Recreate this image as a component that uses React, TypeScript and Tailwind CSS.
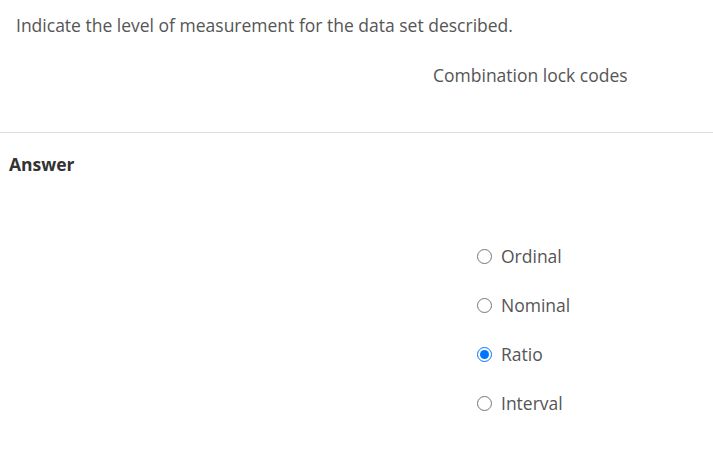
import { useState } from "react";

const opts = ["Ordinal", "Nominal", "Ratio", "Interval"];

export default function App() {
  const [sel, setSel] = useState("Ratio");
  return (
    <div className="min-h-[475px] w-[713px] bg-white text-[#555] font-['Open_Sans',sans-serif] text-[17.5px]">
      <div className="pl-4 pt-[13px] leading-6">Indicate the level of measurement for the data set described.</div>
      <div className="pl-[433px] pt-[26px] leading-6">Combination lock codes</div>
      <div className="mt-[45px] border-t border-[#ddd]" />
      <div className="pl-[9px] pt-[19px] font-bold text-[#333] leading-6">Answer</div>
      <div className="flex flex-col gap-[25px] pl-[477px] pt-[68px]">
        {opts.map((o) => (
          <label key={o} className="flex items-center gap-[9px] leading-6 cursor-pointer">
            <input
              type="radio"
              name="lvl"
              checked={sel === o}
              onChange={() => setSel(o)}
              className="m-0 w-[15px] h-[15px] accent-[#0075ff]"
            />
            <span>{o}</span>
          </label>
        ))}
      </div>
    </div>
  );
}
